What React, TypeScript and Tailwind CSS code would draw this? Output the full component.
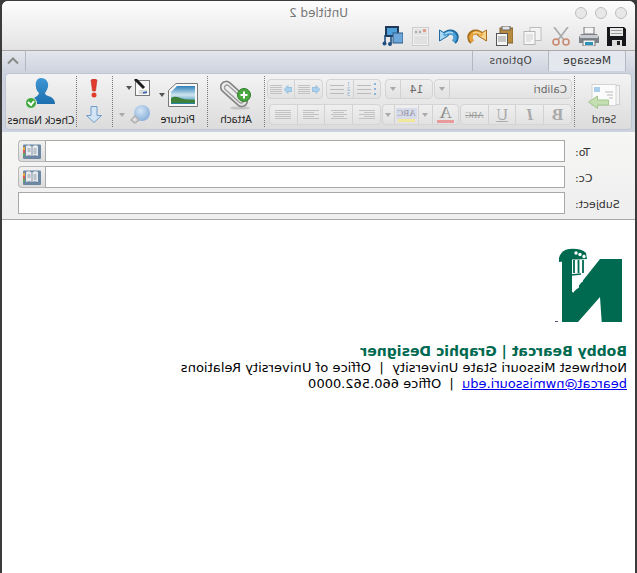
import type { ReactNode } from 'react'

const ui = "font-['DejaVu_Sans',sans-serif]"

// the whole screenshot is a mirrored window, so icons are drawn as seen and flipped back
function Icon({ w, h, children, className = '' }: { w: number; h: number; children: ReactNode; className?: string }) {
  return (
    <svg width={w} height={h} viewBox={`0 0 ${w} ${h}`} className={`-scale-x-100 shrink-0 ${className}`}>
      {children}
    </svg>
  )
}

function Caret({ light }: { light?: boolean }) {
  return <div className={`h-0 w-0 border-x-[3px] border-x-transparent border-t-[4px] ${light ? 'border-t-[#aaa]' : 'border-t-[#555]'}`} />
}

function SaveIcon() {
  return (
    <Icon w={19} h={19}>
      <path d="M0 0h17l2 2v17H0z" fill="#15171a" />
      <rect x="3" y="1" width="13" height="8" fill="#e8e8e8" />
      <rect x="4" y="3" width="11" height="1" fill="#999" />
      <rect x="4" y="6" width="11" height="1" fill="#999" />
      <rect x="5" y="13" width="10" height="6" fill="#ddd" />
      <rect x="10" y="14" width="3" height="4" fill="#222" />
    </Icon>
  )
}

function PrintIcon() {
  return (
    <Icon w={20} h={19}>
      <rect x="5" y="0" width="10" height="7" fill="#f4f4f4" stroke="#777" />
      <path d="M2 7h16l2 3v6H0v-6z" fill="#7d8288" />
      <rect x="1" y="8" width="18" height="3" fill="#c8ccd0" />
      <rect x="4" y="13" width="12" height="6" fill="#f2f2f2" stroke="#777" />
      <rect x="6" y="15" width="8" height="3" fill="#2c93b8" />
    </Icon>
  )
}

function CutIcon() {
  return (
    <Icon w={18} h={19}>
      <path d="M2 0l10 13M16 0L6 13" stroke="#a8a8a8" strokeWidth="1.6" fill="none" />
      <circle cx="4" cy="15" r="3" fill="none" stroke="#c98a70" strokeWidth="1.6" />
      <circle cx="14" cy="15" r="3" fill="none" stroke="#c98a70" strokeWidth="1.6" />
    </Icon>
  )
}

function CopyIcon() {
  return (
    <Icon w={19} h={18}>
      <rect x="7" y="0.5" width="11" height="13" fill="#f3f3f3" stroke="#bcbcbc" />
      <rect x="1" y="4.5" width="11" height="13" fill="#f7f7f7" stroke="#b5b5b5" />
      <path d="M3 8h7M3 10h7M3 12h7M3 14h5" stroke="#cfcfcf" />
    </Icon>
  )
}

function PasteIcon() {
  return (
    <Icon w={17} h={20}>
      <rect x="4" y="2" width="13" height="15" fill="#b98a3e" stroke="#80602c" />
      <rect x="6" y="0" width="8" height="4" fill="#e4e4e4" stroke="#666" />
      <rect x="0.5" y="7.5" width="11" height="12" fill="#f5f5f5" stroke="#555" />
      <path d="M2 11h8M2 13h8M2 15h8" stroke="#999" />
    </Icon>
  )
}

function CurveArrow({ light, dark, edge, mirror }: { light: string; dark: string; edge: string; mirror?: boolean }) {
  return (
    <Icon w={20} h={15}>
      <g transform={mirror ? 'translate(20 0) scale(-1 1)' : undefined}>
        <path d="M4 7C7 3 12 2 15 4c3 2 3 6 0 9" fill="none" stroke={edge} strokeWidth="5" />
        <path d="M0.500 1v11l9-5.500z" fill={light} stroke={edge} />
        <path d="M5 6.500C8 3 12 3 14.500 5c2 2 2 5 0 7.500" fill="none" stroke={dark} strokeWidth="3.400" />
        <path d="M6 5C9 3 12 3 14 4" fill="none" stroke={light} strokeWidth="1.400" />
      </g>
    </Icon>
  )
}

function DocIcon() {
  return (
    <Icon w={17} h={19}>
      <rect x="0.5" y="0.5" width="16" height="18" fill="#f0f0f0" stroke="#ccc" />
      <rect x="2" y="2" width="13" height="6" fill="#e2e2e2" />
      <rect x="3" y="4" width="2" height="2" fill="#aaa" />
      <rect x="7" y="4" width="2" height="2" fill="#aaa" />
      <rect x="11" y="2" width="3" height="3" fill="#e2a08a" />
      <path d="M2 10h13M2 12h13M2 14h13M2 16h13" stroke="#d2d2d2" />
    </Icon>
  )
}

function MediaIcon() {
  return (
    <Icon w={21} h={20}>
      <rect x="3" y="0" width="14" height="11" fill="#1e3a58" />
      <rect x="5" y="2" width="10" height="7" fill="#4f9fd8" />
      <rect x="11" y="7" width="10" height="10" fill="#6da6d8" stroke="#2c5a88" />
      <path d="M3 9v8M9 10v7" stroke="#1f4f80" strokeWidth="1.6" />
      <circle cx="2.5" cy="17.5" r="2" fill="#1f4f80" />
      <circle cx="8" cy="18" r="2" fill="#1f4f80" />
    </Icon>
  )
}

function BookIcon() {
  return (
    <Icon w={18} h={15}>
      <rect x="0" y="0.5" width="18" height="14.500" rx="1" fill="#6c87a3" />
      <path d="M3 2c2-1 4-1 6 1 2-2 4-2 6-1v10c-2-1-4-1-6 0-2-1-4-1-6 0z" fill="#e6eaee" />
      <path d="M9 3v9" stroke="#8a98a6" />
      <path d="M4.500 5h3M4.500 7h3M10.500 5h3M10.500 7h3M10.500 9h3" stroke="#8c98a4" />
      <rect x="0" y="3" width="2" height="3" fill="#e8a33c" />
      <rect x="0" y="6" width="2" height="3" fill="#d65a5a" />
      <rect x="0" y="9" width="2" height="3" fill="#5aa860" />
    </Icon>
  )
}

function SendIcon() {
  return (
    <Icon w={32} h={25}>
      <rect x="9" y="1.5" width="22.500" height="19" fill="#f4f4f4" stroke="#d0d0d0" />
      <rect x="4" y="0.5" width="24" height="21" fill="#fbfbfb" stroke="#d4d4d4" />
      <rect x="6" y="3" width="6" height="5" fill="#a9cdea" />
      <path d="M17 8h8M19 11h6M21 14h4" stroke="#b8b8b8" />
      <path d="M0.500 18l9-6v4h11v5h-11v3.500z" fill="#c4dfb2" stroke="#a3c68f" />
    </Icon>
  )
}

function AttachIcon() {
  return (
    <Icon w={31} h={32}>
      <ellipse cx="20" cy="29" rx="10" ry="1.600" fill="#c4c4c4" />
      <g transform="rotate(42 14 15)" fill="none">
        <rect x="-2" y="9.500" width="32" height="11" rx="5.500" stroke="#858585" strokeWidth="1.700" />
        <rect x="2" y="12.500" width="24" height="5" rx="2.500" stroke="#9b9b9b" strokeWidth="1.300" />
      </g>
      <circle cx="24" cy="16" r="6.500" fill="#4aa63f" stroke="#2f7d2a" />
      <path d="M24 12.500v7M20.500 16h7" stroke="#fff" strokeWidth="2" />
    </Icon>
  )
}

function PictureIcon() {
  return (
    <Icon w={30} h={24}>
      <defs>
        <linearGradient id="sky" x1="0" y1="0" x2="0" y2="1">
          <stop offset="0" stopColor="#2f7fb8" />
          <stop offset="0.5" stopColor="#cfe6f0" />
          <stop offset="1" stopColor="#1f7fa8" />
        </linearGradient>
      </defs>
      <path d="M8 0.5h21.5v23H0.5v-16z" fill="#f8f8f8" stroke="#777" />
      <path d="M9 3h18v18H3V9z" fill="url(#sky)" />
      <path d="M3 15c5-3 9 0 13 1s8 0 11 1v3H3z" fill="#3f7f3c" />
    </Icon>
  )
}

function SignIcon() {
  return (
    <Icon w={16} h={17}>
      <rect x="1.5" y="1.5" width="14" height="15" fill="#f6f6f6" stroke="#777" />
      <path d="M5 12h8M5 14h8" stroke="#bbb" />
      <path d="M1 0l9 9" stroke="#1c1c1c" strokeWidth="3" />
      <path d="M9 14l4-1" stroke="#2c62b0" strokeWidth="1.6" />
    </Icon>
  )
}

function GlobeIcon() {
  return (
    <Icon w={20} h={19}>
      <defs>
        <radialGradient id="globe" cx="0.4" cy="0.35" r="0.7">
          <stop offset="0" stopColor="#d5e6f6" />
          <stop offset="1" stopColor="#84add8" />
        </radialGradient>
      </defs>
      <circle cx="12" cy="8" r="8" fill="url(#globe)" />
      <path d="M1 15l4-4 4 4-4 3z" fill="none" stroke="#b4b4b4" strokeWidth="1.6" />
    </Icon>
  )
}

function PersonIcon() {
  return (
    <Icon w={31} h={32}>
      <defs>
        <linearGradient id="person" x1="0" y1="0" x2="0" y2="1">
          <stop offset="0" stopColor="#3f97d4" />
          <stop offset="1" stopColor="#1d6fae" />
        </linearGradient>
      </defs>
      <path d="M16 1c5 0 8 4 7 9-1 3-2 5-3 6 0 2 3 3 6 4 3 2 4 4 4 7H4c0-3 2-5 5-6 3-2 5-3 5-5-1-1-3-3-3-6-1-5 1-9 5-9z" fill="url(#person)" />
      <circle cx="6" cy="26" r="5.5" fill="#3fa83c" stroke="#eee" />
      <path d="M3 25l3 3 3-4" fill="none" stroke="#fff" strokeWidth="2" />
    </Icon>
  )
}

function NorthwestLogo() {
  return (
    <Icon w={67} h={75}>
      <g transform="translate(-10 -7)">
        <path d="M77 19H55L28 53V16H17v66h16l22-25 1.700 25H77z" fill="#006a51" />
        <path d="M14 18q2-8 10-9 12-1 17 4l1 6-28 3z" fill="#006a51" />
        <path d="M27 19.500h14v14l-3 2v6l-4 2v4l-7 5z" fill="#fff" />
        <path d="M29 20v13M33.500 20v13M38 20v13" stroke="#006a51" strokeWidth="1.800" />
        <path d="M26 35l10-1" stroke="#006a51" strokeWidth="1.600" />
        <circle cx="31" cy="13" r="1.700" fill="#fff" />
        <circle cx="35" cy="14.500" r="1.700" fill="#fff" />
        <circle cx="39" cy="16.500" r="1.700" fill="#fff" />
        <rect x="10" y="81" width="3" height="1" fill="#557" />
      </g>
    </Icon>
  )
}

function Lines({ short }: { short?: boolean }) {
  return (
    <div className="flex flex-col gap-px">
      {[0, 1, 2, 3, 4].map((i) => (
        <div key={i} className={`h-px bg-[#c2c2c2] ${short ? 'w-[12px]' : 'w-[16px]'}`} />
      ))}
    </div>
  )
}

function AlignLines({ align }: { align: string }) {
  return (
    <div className={`flex w-[16px] flex-col gap-px ${align}`}>
      <div className="h-px w-[16px] bg-[#c2c2c2]" />
      <div className="h-px w-[11px] bg-[#c2c2c2]" />
      <div className="h-px w-[16px] bg-[#c2c2c2]" />
      <div className="h-px w-[11px] bg-[#c2c2c2]" />
      <div className="h-px w-[16px] bg-[#c2c2c2]" />
    </div>
  )
}

function Cell({ w, children, first }: { w: string; children?: ReactNode; first?: boolean }) {
  return <div className={`flex items-center justify-center ${w} ${first ? '' : 'border-l border-[#d2d2d2]'}`}>{children}</div>
}

function Segment({ w, children }: { w: string; children: ReactNode }) {
  return <div className={`flex rounded-[4px] border border-[#d4d4d4] bg-gradient-to-b from-[#efefef] to-[#e2e2e2] ${w}`}>{children}</div>
}

function FontGroup() {
  return (
    <div className="my-[2px] flex w-[310px] flex-col gap-[5px] border-l border-dotted border-[#777] pl-[2px] pt-[3px]">
      <div className="flex h-[20px] gap-px">
        <Segment w="w-[138px]">
          <Cell w="flex-1" first>
            <div className={`w-full pl-1 text-[10.5px] text-[#6a6a6a] ${ui}`}>Calibri</div>
          </Cell>
          <Cell w="w-[15px]"><Caret light /></Cell>
        </Segment>
        <Segment w="w-[48px]">
          <Cell w="flex-1" first><span className={`text-[10.5px] text-[#6a6a6a] ${ui}`}>14</span></Cell>
          <Cell w="w-[15px]"><Caret light /></Cell>
        </Segment>
        <div className="w-[2px]" />
        <Segment w="w-[55px]">
          <Cell w="flex-1" first>
            <div className="flex items-center gap-[3px]">
              <div className="flex flex-col gap-[3px]">
                <div className="h-[2px] w-[2px] bg-[#8db4dc]" /><div className="h-[2px] w-[2px] bg-[#8db4dc]" /><div className="h-[2px] w-[2px] bg-[#8db4dc]" />
              </div>
              <div className="flex flex-col gap-[3px]">
                <div className="h-px w-[14px] bg-[#bbb]" /><div className="h-px w-[14px] bg-[#bbb]" /><div className="h-px w-[14px] bg-[#bbb]" />
              </div>
            </div>
          </Cell>
          <Cell w="flex-1">
            <div className="flex items-center gap-[3px]">
              <div className="flex flex-col gap-[2px] text-[5px] leading-[3px] text-[#7fa7d0]"><span>1</span><span>2</span><span>3</span></div>
              <div className="flex flex-col gap-[3px]">
                <div className="h-px w-[14px] bg-[#bbb]" /><div className="h-px w-[14px] bg-[#bbb]" /><div className="h-px w-[14px] bg-[#bbb]" />
              </div>
            </div>
          </Cell>
        </Segment>
        <div className="w-px" />
        <Segment w="w-[56px]">
          <Cell w="flex-1" first>
            <div className="flex items-center gap-[2px]">
              <Icon w={8} h={9}><path d="M8 4.500L4 0.500v2H0v4h4v2z" fill="#a9d0ec" stroke="#7fb0d4" strokeWidth="0.6" /></Icon>
              <Lines short />
            </div>
          </Cell>
          <Cell w="flex-1">
            <div className="flex items-center gap-[2px]">
              <Icon w={8} h={9}><path d="M0 4.500L4 0.500v2h4v4H4v2z" fill="#a9d0ec" stroke="#7fb0d4" strokeWidth="0.6" /></Icon>
              <Lines short />
            </div>
          </Cell>
        </Segment>
      </div>
      <div className="flex h-[21px] gap-px">
        <Segment w="w-[112px]">
          <Cell w="flex-1" first><span className="font-['Liberation_Serif',serif] text-[17px] font-bold text-[#a9a9a9]">B</span></Cell>
          <Cell w="flex-1"><span className="font-['Liberation_Serif',serif] text-[17px] italic font-bold text-[#a9a9a9]">I</span></Cell>
          <Cell w="flex-1"><span className="font-['Liberation_Serif',serif] text-[16px] underline text-[#a9a9a9]">U</span></Cell>
          <Cell w="flex-1"><span className="font-['Liberation_Serif',serif] text-[9px] line-through text-[#999]">ABC</span></Cell>
        </Segment>
        <Segment w="w-[77px]">
          <Cell w="w-[25px]" first>
            <div className="flex flex-col items-center">
              <span className="font-['Liberation_Serif',serif] text-[17px] leading-[14px] text-[#8c8c8c]">A</span>
              <div className="h-[3px] w-[17px] bg-[#e99a9a]" />
            </div>
          </Cell>
          <Cell w="w-[14px]"><Caret light /></Cell>
          <Cell w="flex-1">
            <div className="flex flex-col items-center">
              <span className="bg-[#d8dcea] px-px font-['Liberation_Serif',serif] text-[9px] leading-[11px] text-[#8b8b9b]">ABC</span>
              <div className="h-[3px] w-[17px] bg-[#efe79a]" />
            </div>
          </Cell>
          <Cell w="w-[12px]"><Caret light /></Cell>
        </Segment>
        <Segment w="w-[112px]">
          <Cell w="flex-1" first><AlignLines align="items-start" /></Cell>
          <Cell w="flex-1"><AlignLines align="items-center" /></Cell>
          <Cell w="flex-1"><AlignLines align="items-end" /></Cell>
          <Cell w="flex-1"><Lines /></Cell>
        </Segment>
      </div>
    </div>
  )
}

function Ribbon() {
  return (
    <div className="bg-[#ccd2de] pb-[2px] pl-[3px] pt-[2px]">
      <div className="flex h-[57px] w-[627px] rounded-[4px] border border-[#bfc5d2] bg-gradient-to-b from-[#f3f3f3] to-[#dcdcdc] font-['Noto_Sans',sans-serif] text-[10.5px] leading-[14px] text-[#222]">
        <div className="flex w-[56px] flex-col items-center pr-[2px] pt-[10px] text-[#444]">
          <SendIcon />
          <span className="mt-[3px]">Send</span>
        </div>
        <FontGroup />
        <div className="my-[2px] flex w-[57px] flex-col items-center border-l border-dotted border-[#777] pt-[3px]">
          <AttachIcon />
          <span className="mt-px">Attach</span>
        </div>
        <div className="my-[2px] flex w-[95px] border-l border-dotted border-[#777] pl-[9px]">
          <div className="flex w-[48px] flex-col items-start pt-[7px]">
            <div className="flex items-center gap-[3px]">
              <PictureIcon />
              <Caret />
            </div>
            <span className="ml-[3px] mt-[5px]">Picture</span>
          </div>
          <div className="flex flex-col pt-[3px]">
            <div className="flex items-center gap-[2px]"><SignIcon /><Caret /></div>
            <div className="mt-[9px] flex items-center gap-[5px]"><GlobeIcon /><Caret light /></div>
          </div>
        </div>
        <div className="my-[2px] flex w-[36px] flex-col items-center border-l border-dotted border-[#777] pt-[3px]">
          <Icon w={8} h={19}>
            <path d="M1 1q3-2 6 0L5.500 12h-3z" fill="#e23b2e" stroke="#b0261c" strokeWidth="0.5" />
            <circle cx="4" cy="16" r="2.500" fill="#e23b2e" />
          </Icon>
          <div className="mt-[8px]">
            <Icon w={16} h={17}>
              <path d="M5 0.500h6v9h4.500L8 16.500 0.500 9.500H5z" fill="#d3e5f5" stroke="#6f9cc8" />
            </Icon>
          </div>
        </div>
        <div className="my-[2px] flex flex-1 flex-col items-center border-l border-dotted border-[#777] pt-px">
          <PersonIcon />
          <span className="mt-[4px] whitespace-nowrap">Check Names</span>
        </div>
      </div>
    </div>
  )
}

function Field({ label, book }: { label: string; book?: boolean }) {
  return (
    <div className="flex h-[22px] items-stretch">
      <div className="flex w-[45px] items-center justify-end pt-[4px] text-[11px] text-[#333]">{label}</div>
      <div className="w-[10px]" />
      <div className="flex-1 border border-[#a8a8a8] bg-white" />
      {book && (
        <div className="flex w-[27px] items-center justify-center rounded-r-[4px] border border-l-0 border-[#b8b8b8] bg-gradient-to-b from-[#f2f2f2] to-[#dcdcdc]">
          <BookIcon />
        </div>
      )}
    </div>
  )
}

export default function App() {
  return (
    <div className={`-scale-x-100 h-[573px] w-[637px] overflow-hidden bg-[#3b3b3b] px-[2px] pt-px ${ui}`}>
      <div className="flex h-full flex-col overflow-hidden rounded-t-[6px] bg-white">
        <div className="h-[49px] shrink-0 bg-gradient-to-b from-[#fdfdfd] to-[#e3e3e3]">
          <div className="grid h-[24px] grid-cols-[1fr_auto_1fr] items-center px-[8px]">
            <div className="flex gap-[8px]">
              <div className="h-[12px] w-[12px] rounded-full border border-[#bdbdbd] bg-[#e8e8e8]" />
              <div className="h-[12px] w-[12px] rounded-full border border-[#bdbdbd] bg-[#e8e8e8]" />
              <div className="h-[12px] w-[12px] rounded-full border border-[#bdbdbd] bg-[#e8e8e8]" />
            </div>
            <div className="text-[12px] text-[#777]">Untitled 2</div>
            <div />
          </div>
          <div className="flex h-[22px] items-center">
            <div className="ml-[8px] flex w-[20px] justify-center"><SaveIcon /></div>
            <div className="ml-[8px] flex w-[20px] justify-center"><PrintIcon /></div>
            <div className="ml-[8px] flex w-[20px] justify-center"><CutIcon /></div>
            <div className="ml-[8px] flex w-[20px] justify-center"><CopyIcon /></div>
            <div className="ml-[8px] flex w-[20px] justify-center"><PasteIcon /></div>
            <div className="ml-[8px] flex w-[20px] justify-center"><CurveArrow light="#f7d48c" dark="#e8a23c" edge="#a8701f" mirror /></div>
            <div className="ml-[8px] flex w-[20px] justify-center"><CurveArrow light="#a8d8f4" dark="#4d9fd8" edge="#1f6a9f" /></div>
            <div className="ml-[8px] flex w-[20px] justify-center"><DocIcon /></div>
            <div className="ml-[8px] flex w-[20px] justify-center"><MediaIcon /></div>
          </div>
        </div>
        <div className="flex h-[21px] shrink-0 items-end border-t border-[#a9a9a9] bg-gradient-to-b from-[#e4e6ec] to-[#cfd4df] text-[10.5px] tracking-[0.3px]">
          <div className="flex h-full w-[10px] border-r border-[#b4b8c2]" />
          <div className="flex h-full w-[77px] items-center justify-center border-r border-[#b4b8c2] bg-[#e4e7ee] text-[#333]">Message</div>
          <div className="flex h-full w-[76px] items-center justify-center border-r border-[#b4b8c2] text-[#444]">Options</div>
          <div className="flex-1" />
          <div className="flex h-full w-[24px] items-center justify-center border-l border-[#b4b8c2]">
            <Icon w={12} h={8}><path d="M1 6.500l5-5 5 5" fill="none" stroke="#8a8a8a" strokeWidth="2" /></Icon>
          </div>
        </div>
        <Ribbon />
        <div className="flex h-[88px] shrink-0 flex-col gap-[4px] border-b border-[#a9a9a9] bg-gradient-to-b from-[#f6f7f5] to-[#eeeeee] pl-[15px] pr-[16px] pt-[8px]">
          <Field label="To:" book />
          <Field label="Cc:" book />
          <Field label="Subject:" />
        </div>
        <div className="flex-1 pl-[8px] pt-[27px] text-[13px] leading-[16px] text-black">
          <div className="mb-[21px] ml-[5px]"><NorthwestLogo /></div>
          <div className="text-[14px] font-bold leading-[17px] text-[#006a51]">Bobby Bearcat | Graphic Designer</div>
          <div className="whitespace-pre tracking-[0.06px]">Northwest Missouri State University  |  Office of University Relations</div>
          <div className="whitespace-pre"><span className="text-[#0000ee] underline">bearcat@nwmissouri.edu</span>  |  Office 660.562.0000</div>
        </div>
      </div>
    </div>
  )
}
